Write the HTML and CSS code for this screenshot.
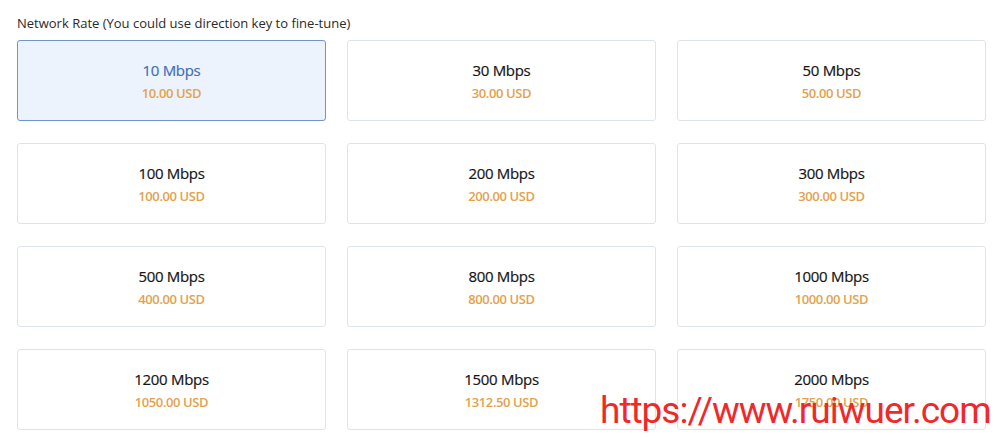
FILE: index.html
```html
<!DOCTYPE html>
<html>
<head>
<meta charset="utf-8">
<link rel="stylesheet" href="styles.css">
</head>
<body>
<div class="page">
  <div class="label">Network Rate (You could use direction key to fine-tune)</div>
  <div class="grid">
    <div class="card selected"><div class="rate">10 Mbps</div><div class="price">10.00 USD</div></div>
    <div class="card"><div class="rate">30 Mbps</div><div class="price">30.00 USD</div></div>
    <div class="card"><div class="rate">50 Mbps</div><div class="price">50.00 USD</div></div>
    <div class="card"><div class="rate">100 Mbps</div><div class="price">100.00 USD</div></div>
    <div class="card"><div class="rate">200 Mbps</div><div class="price">200.00 USD</div></div>
    <div class="card"><div class="rate">300 Mbps</div><div class="price">300.00 USD</div></div>
    <div class="card"><div class="rate">500 Mbps</div><div class="price">400.00 USD</div></div>
    <div class="card"><div class="rate">800 Mbps</div><div class="price">800.00 USD</div></div>
    <div class="card"><div class="rate">1000 Mbps</div><div class="price">1000.00 USD</div></div>
    <div class="card"><div class="rate">1200 Mbps</div><div class="price">1050.00 USD</div></div>
    <div class="card"><div class="rate">1500 Mbps</div><div class="price">1312.50 USD</div></div>
    <div class="card"><div class="rate">2000 Mbps</div><div class="price">1750.00 USD</div></div>
  </div>
  <div class="watermark">https://www.ruiwuer.com</div>
</div>
</body>
</html>
```
FILE: styles.css
```css
html, body {
  margin: 0;
  padding: 0;
  background: #fff;
}
.page {
  position: relative;
  width: 1000px;
  height: 438px;
  overflow: hidden;
  padding: 13px 15px 0 17px;
  box-sizing: border-box;
  font-family: "Open Sans", "Noto Sans", sans-serif;
}
.label {
  font-size: 13px;
  color: #2a2a2a;
  line-height: 20px;
  margin-bottom: 7px;
  letter-spacing: 0;
}
.grid {
  display: grid;
  grid-template-columns: repeat(3, 309px);
  column-gap: 21px;
  row-gap: 22px;
}
.card {
  height: 81px;
  box-sizing: border-box;
  border: 1px solid #dfe4ea;
  border-radius: 3px;
  background: #fff;
  display: flex;
  flex-direction: column;
  align-items: center;
  justify-content: center;
  padding-top: 1px;
}
.card.selected {
  background: #edf3fc;
  border-color: #6f95cc;
}
.rate {
  font-size: 15px;
  color: #151515;
  line-height: 20px;
  letter-spacing: -0.3px;
  -webkit-text-stroke: 0.2px #151515;
}
.selected .rate {
  color: #3f6fb5;
  -webkit-text-stroke: 0.2px #3f6fb5;
}
.price {
  font-size: 13px;
  font-weight: 600;
  color: #e2a24e;
  line-height: 18px;
  margin-top: 4px;
  letter-spacing: -0.4px;
}
.watermark {
  position: absolute;
  left: 600px;
  top: 389px;
  font-family: "Roboto", sans-serif;
  font-size: 37px;
  color: #f0282a;
  line-height: 44px;
  letter-spacing: -1px;
  white-space: nowrap;
}
```
